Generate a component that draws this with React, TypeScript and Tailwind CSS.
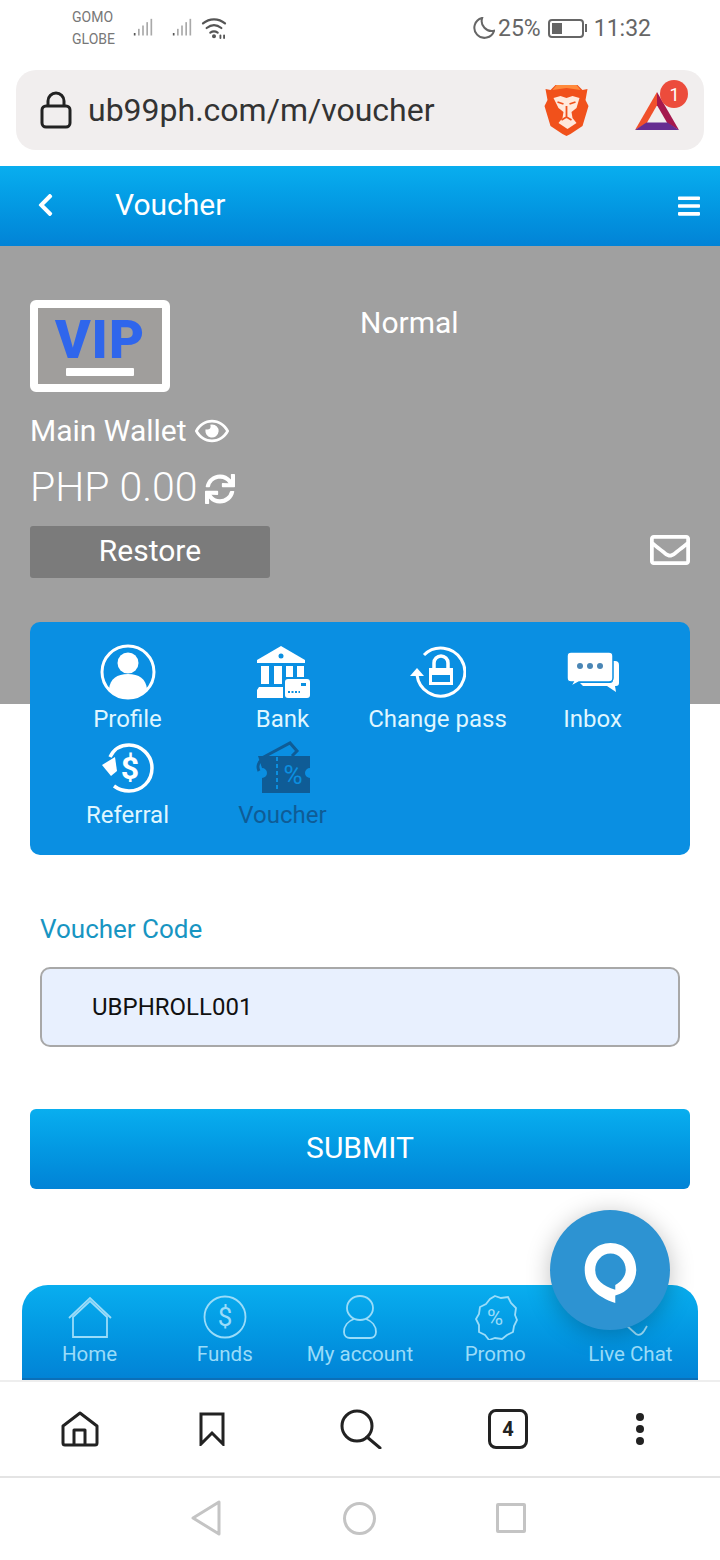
import React from 'react';
import { FaChevronLeft, FaBars, FaRegEye, FaSync, FaRegEnvelope } from 'react-icons/fa';

type IconProps = { className?: string };

function SignalBars({ className }: IconProps) {
  return (
    <svg viewBox="0 0 24 24" className={className} fill="#a9a9a9">
      <rect x="1" y="18" width="2" height="3" fill="#555" />
      <rect x="6" y="13" width="2" height="8" />
      <rect x="11" y="9" width="2" height="12" />
      <rect x="16" y="5" width="2" height="16" />
      <rect x="21" y="1" width="2" height="20" />
    </svg>
  );
}

function WifiIcon({ className }: IconProps) {
  return (
    <svg viewBox="0 0 28 24" className={className} fill="none" stroke="#555" strokeWidth="2.4" strokeLinecap="round">
      <path d="M2 7c7-6 17-6 24 0" />
      <path d="M6 12c5-4 11-4 16 0" />
      <path d="M10 17c3-2 5-2 8 0" />
      <circle cx="14" cy="21" r="1" fill="#555" />
      <path d="M21 20v3M25 20v3" strokeWidth="2" />
    </svg>
  );
}

function BraveLogo({ className }: IconProps) {
  return (
    <svg viewBox="0 0 44 52" className={className}>
      <path d="M11 1h22l5 5 5-1-2 11 3 6-6 20-12 8-4 2-4-2-12-8-6-20 3-6L1 5l5 1z" fill="#f1511b" />
      <path d="M12 1h20l4 5-14-2-14 2z" fill="#ff8a3c" />
      <path d="M9 14l7-2 6 2 6-2 7 2-3 10-5 4 1 6 4 5-9 6-9-6 4-5 1-6-5-4z" fill="#ffe9dc" />
      <path d="M13 18l6 2M31 18l-6 2M22 22v11M17 36l5-3 5 3" fill="none" stroke="#f1511b" strokeWidth="1.800" />
    </svg>
  );
}

function BatLogo({ className }: IconProps) {
  return (
    <svg viewBox="0 0 46 44" className={className}>
      <path d="M23 2L0 42l12-7L23 16z" fill="#f0502b" />
      <path d="M23 2l23 40-12-7L23 16z" fill="#a5184e" />
      <path d="M0 42h46l-12-8H12z" fill="#662d91" />
    </svg>
  );
}

function ProfileIcon({ className }: IconProps) {
  return (
    <svg viewBox="0 0 56 56" className={className}>
      <circle cx="28" cy="28" r="26" fill="none" stroke="#fff" strokeWidth="3" />
      <circle cx="28" cy="19" r="10.5" fill="#fff" />
      <path d="M9 45c1-10 8-15 19-15s18 5 19 15c-5 6-12 9-19 9s-14-3-19-9z" fill="#fff" />
    </svg>
  );
}

function BankIcon({ className }: IconProps) {
  return (
    <svg viewBox="0 0 54 52" className={className} fill="#fff">
      <path d="M25 0L1 14v3h48v-3z" />
      <circle cx="25" cy="10" r="2.5" fill="#0b8fe0" />
      <rect x="5" y="20" width="8" height="18" />
      <rect x="18" y="20" width="8" height="18" />
      <rect x="30" y="20" width="7" height="11" />
      <rect x="41" y="20" width="7" height="11" />
      <path d="M3 41h24v11H1v-8z" />
      <rect x="29" y="33" width="25" height="19" rx="3" />
      <path d="M32 46h12" stroke="#0b8fe0" strokeWidth="2" strokeDasharray="2 1.5" />
      <rect x="45" y="37" width="5" height="3" fill="#0b8fe0" />
    </svg>
  );
}

function ChangePassIcon({ className }: IconProps) {
  return (
    <svg viewBox="0 0 56 52" className={className}>
      <path d="M14 9A24 24 0 1 1 7 29" fill="none" stroke="#fff" strokeWidth="3" />
      <path d="M0 30l7-8 7 8z" fill="#fff" />
      <path d="M24 23v-6a7 7 0 0 1 14 0v6" fill="none" stroke="#fff" strokeWidth="3.500" />
      <path d="M19 22h24v17H19z M22 29v7h18v-7z" fill="#fff" fillRule="evenodd" />
    </svg>
  );
}

function InboxIcon({ className }: IconProps) {
  return (
    <svg viewBox="0 0 52 40" className={className} fill="#fff">
      <path d="M46 9h2a4 4 0 0 1 4 4v18a3 3 0 0 1-3 3h-1l1 6-9-6H16l-3-3h30a3 3 0 0 0 3-3z" />
      <path
        d="M4 0h38a4 4 0 0 1 4 4v22a4 4 0 0 1-4 4H12l-9 5 3-5H4a4 4 0 0 1-4-4V4a4 4 0 0 1 4-4z"
        stroke="#0a8fe2"
        strokeWidth="1.500"
      />
      <circle cx="13" cy="14" r="3" fill="#4a86b5" />
      <circle cx="23" cy="14" r="3" fill="#4a86b5" />
      <circle cx="33" cy="14" r="3" fill="#4a86b5" />
    </svg>
  );
}

function ReferralIcon({ className }: IconProps) {
  return (
    <svg viewBox="0 0 54 50" className={className}>
      <path d="M9 14C13 6 20 2 28 2c12 0 23 10 23 23S41 48 28 48c-6 0-11-2-15-5" fill="none" stroke="#fff" strokeWidth="3.500" />
      <path d="M1 22l13-8 2 14-6 5z" fill="#fff" />
      <text x="29" y="36" textAnchor="middle" fontFamily="Roboto, sans-serif" fontWeight="700" fontSize="32" fill="#fff">$</text>
    </svg>
  );
}

function VoucherIcon({ className }: IconProps) {
  return (
    <svg viewBox="0 0 54 54" className={className}>
      <path d="M4 18L34 2l7 8-5 5M7 18c-5 3-6 8-4 12" fill="none" stroke="#0f5c96" strokeWidth="3" />
      <path d="M2 15h52v12a5 5 0 0 0 0 10v15H6V37a5 5 0 0 0 0-10z" fill="#0f5c96" />
      <path d="M21 16v35" stroke="#0b8fe0" strokeWidth="2" strokeDasharray="4 3" />
      <text x="37" y="43" textAnchor="middle" fontFamily="Roboto, sans-serif" fontSize="26" fill="#0b8fe0">%</text>
    </svg>
  );
}

function HomeTab({ className }: IconProps) {
  return (
    <svg viewBox="0 0 44 42" className={className} fill="none" stroke="#9adcf9" strokeWidth="1.800">
      <path d="M1 22L22 2l21 20" />
      <path d="M5 41V21L22 5l17 16v20z" />
    </svg>
  );
}

function FundsTab({ className }: IconProps) {
  return (
    <svg viewBox="0 0 44 44" className={className} fill="none" stroke="#9adcf9" strokeWidth="1.800">
      <circle cx="22" cy="22" r="20.500" />
      <text x="22" y="31" textAnchor="middle" fontFamily="Roboto, sans-serif" fontSize="26" fill="#9adcf9" stroke="none">$</text>
    </svg>
  );
}

function AccountTab({ className }: IconProps) {
  return (
    <svg viewBox="0 0 34 44" className={className} fill="none" stroke="#9adcf9" strokeWidth="1.800">
      <ellipse cx="17" cy="13" rx="13" ry="12" />
      <path d="M11 24C5 26 1 31 1 37c0 4 3 6 6 6h20c3 0 6-2 6-6 0-6-4-11-10-13" />
    </svg>
  );
}

function PromoTab({ className }: IconProps) {
  return (
    <svg viewBox="0 0 46 46" className={className} fill="none" stroke="#9adcf9" strokeWidth="1.800">
      <path d="M23 2l6 2 7-1 3 6 5 5-1 7 2 5-3 6-1 6-6 3-5 4-7-1-6 2-4-5-6-3v-7l-3-6 3-5 1-7 6-3 4-5z" />
      <text x="23" y="31" textAnchor="middle" fontFamily="Roboto, sans-serif" fontSize="22" fill="#9adcf9" stroke="none">%</text>
    </svg>
  );
}

// mostly hidden behind the floating chat button, only the tail shows
function ChatTab({ className }: IconProps) {
  return (
    <svg viewBox="0 0 44 44" className={className} fill="none" stroke="#9adcf9" strokeWidth="1.800">
      <path d="M18 30l10 9c3 2 6 0 8-3l3-5" />
    </svg>
  );
}

function NavHome({ className }: IconProps) {
  return (
    <svg viewBox="0 0 38 36" className={className} fill="none" stroke="#222" strokeWidth="3" strokeLinejoin="round">
      <path d="M2 15L19 2l17 13v17a2 2 0 0 1-2 2H4a2 2 0 0 1-2-2z" />
      <path d="M13 34V19h11v15" />
    </svg>
  );
}

function NavBookmark({ className }: IconProps) {
  return (
    <svg viewBox="0 0 26 34" className={className} fill="none" stroke="#222" strokeWidth="3">
      <path d="M2 2h22v30l-11-11L2 32z" />
    </svg>
  );
}

function NavSearch({ className }: IconProps) {
  return (
    <svg viewBox="0 0 42 40" className={className} fill="none" stroke="#222" strokeWidth="3" strokeLinecap="round">
      <circle cx="17" cy="17" r="15" />
      <path d="M27 28l13 11" />
    </svg>
  );
}

const accountItems = [
  { label: 'Profile', icon: <ProfileIcon className="h-[56px] w-[56px]" />, active: false },
  { label: 'Bank', icon: <BankIcon className="h-[52px] w-[54px]" />, active: false },
  { label: 'Change pass', icon: <ChangePassIcon className="h-[52px] w-[56px]" />, active: false },
  { label: 'Inbox', icon: <InboxIcon className="h-[40px] w-[52px]" />, active: false },
  { label: 'Referral', icon: <ReferralIcon className="h-[50px] w-[54px]" />, active: false },
  { label: 'Voucher', icon: <VoucherIcon className="h-[54px] w-[54px]" />, active: true },
];

const tabs = [
  { label: 'Home', icon: <HomeTab className="h-[42px] w-[44px]" /> },
  { label: 'Funds', icon: <FundsTab className="h-[44px] w-[44px]" /> },
  { label: 'My account', icon: <AccountTab className="h-[44px] w-[34px]" /> },
  { label: 'Promo', icon: <PromoTab className="h-[46px] w-[46px]" /> },
  { label: 'Live Chat', icon: <ChatTab className="h-[44px] w-[44px]" /> },
];

export default function App() {
  return (
    <div className="relative flex h-[1560px] w-[720px] flex-col overflow-hidden bg-white font-['Roboto',sans-serif]">
      {/* phone status bar */}
      <div className="flex h-[70px] shrink-0 items-center justify-between pl-[72px] pr-[69px] pb-[14px] text-[#666]">
        <div className="flex items-center">
          <div className="flex flex-col text-[14px] leading-[22px] text-[#777]">
            <span>GOMO</span>
            <span>GLOBE</span>
          </div>
          <SignalBars className="ml-[16px] h-[20px] w-[24px]" />
          <SignalBars className="ml-[15px] h-[20px] w-[24px]" />
          <WifiIcon className="ml-[7px] h-[22px] w-[26px]" />
        </div>
        <div className="flex items-center text-[23px] leading-none">
          <svg viewBox="0 0 24 24" className="h-[22px] w-[22px]" fill="none" stroke="#666" strokeWidth="2.200">
            <path d="M10 1a11 11 0 1 0 13 14A11 11 0 0 1 10 1z" />
          </svg>
          <span className="ml-[3px]">25%</span>
          <div className="ml-[7px] flex h-[19px] w-[36px] items-center rounded-[4px] border-2 border-[#666] p-[2px]">
            <div className="h-full w-[10px] bg-[#666]" />
          </div>
          <div className="ml-[1px] h-[8px] w-[2px] bg-[#666]" />
          <span className="ml-[7px]">11:32</span>
        </div>
      </div>

      {/* browser address bar */}
      <div className="mx-[16px] flex h-[80px] shrink-0 items-center rounded-[20px] bg-[#f1eeee] pl-[24px]">
        <svg viewBox="0 0 32 38" className="h-[38px] w-[32px]" fill="none" stroke="#222" strokeWidth="3">
          <path d="M8 15V10a8 8 0 0 1 16 0v5" />
          <rect x="2" y="15" width="28" height="21" rx="4" />
        </svg>
        <span className="ml-[16px] text-[32px] leading-none text-[#333]">ub99ph.com/m/voucher</span>
        <BraveLogo className="ml-[110px] h-[52px] w-[45px]" />
        <div className="relative ml-[45px]">
          <BatLogo className="mt-[2px] h-[42px] w-[46px]" />
          <div className="absolute -right-[8px] -top-[8px] flex h-[28px] w-[28px] items-center justify-center rounded-full bg-[#ec4c3c] text-[18px] text-white">
            1
          </div>
        </div>
      </div>

      {/* site header */}
      <div className="mt-[16px] flex h-[80px] shrink-0 items-center bg-gradient-to-b from-[#09aeef] to-[#0283d6] pl-[37px] pr-[20px] text-white">
        <FaChevronLeft className="mb-[3px] h-[26px] w-[17px]" />
        <span className="mb-[4px] ml-[61px] flex-1 text-[30px]">Voucher</span>
        <FaBars className="h-[26px] w-[22px]" />
      </div>

      {/* wallet panel */}
      <div className="flex h-[458px] shrink-0 flex-col bg-[#a0a0a0] px-[30px] pt-[54px] text-white">
        <div className="flex">
          <div className="flex h-[92px] w-[140px] flex-col items-center rounded-[6px] border-[8px] border-white bg-[#a09e9c] pt-[5px]">
            <span className="text-[54px] font-black leading-[54px] tracking-[1px] text-[#2f66ec]">VIP</span>
            <div className="mt-[1px] h-[8px] w-[68px] rounded-[1px] bg-white" />
          </div>
          <span className="ml-[190px] mt-[5px] text-[30px] leading-[36px]">Normal</span>
        </div>
        <div className="mt-[21px] flex items-center">
          <span className="text-[30px] leading-[36px]">Main Wallet</span>
          <FaRegEye className="ml-[8px] h-[34px] w-[34px]" />
        </div>
        <div className="mt-[14px] flex items-center">
          <span className="text-[41px] font-light leading-[48px]">PHP 0.00</span>
          <FaSync className="ml-[7px] mt-[4px] h-[30px] w-[30px]" />
        </div>
        <div className="mt-[15px] flex items-center justify-between">
          <button className="h-[52px] w-[240px] rounded-[3px] bg-[#7b7b7b] pb-[3px] text-[30px] text-white">Restore</button>
          <FaRegEnvelope className="mb-[4px] h-[40px] w-[40px]" />
        </div>
      </div>

      {/* account shortcuts, overlaps the grey panel */}
      <div className="relative mx-[30px] -mt-[82px] grid h-[233px] shrink-0 grid-cols-4 content-start rounded-[10px] bg-[#0a8fe2] px-[20px] pt-[20px]">
        {accountItems.map(item => (
          <div key={item.label} className="flex h-[96px] flex-col items-center">
            <div className="flex h-[60px] items-center">{item.icon}</div>
            <span className={`mt-[2px] text-[24px] leading-[30px] ${item.active ? 'text-[#0f5c96]' : 'text-[#dff6ff]'}`}>
              {item.label}
            </span>
          </div>
        ))}
      </div>

      {/* voucher form */}
      <label className="ml-[40px] mt-[58px] shrink-0 text-[26px] leading-[32px] text-[#1895c2]">Voucher Code</label>
      <div className="mx-[40px] mt-[22px] flex h-[80px] shrink-0 items-center rounded-[10px] border-2 border-[#a8a8a8] bg-[#e8f0fe] pl-[50px] text-[24px] text-[#111]">
        UBPHROLL001
      </div>
      <button className="mx-[30px] mt-[62px] h-[80px] shrink-0 rounded-[6px] bg-gradient-to-b from-[#09aeef] to-[#0283d6] pb-[3px] text-[30px] text-white">
        SUBMIT
      </button>

      {/* site bottom tabs */}
      <div className="mx-[22px] mt-[96px] grid h-[95px] shrink-0 grid-cols-5 rounded-t-[26px] border-b-2 border-[#0b6fb8] bg-gradient-to-b from-[#09aeef] to-[#0283d6] pt-[8px]">
        {tabs.map(tab => (
          <div key={tab.label} className="flex flex-col items-center">
            <div className="flex h-[48px] items-center">{tab.icon}</div>
            <span className="text-[20.500px] leading-[26px] text-[#9adcf9]">{tab.label}</span>
          </div>
        ))}
      </div>

      {/* browser bottom nav */}
      <div className="flex h-[98px] shrink-0 items-center border-y-2 border-t-[#eeeeee] border-b-[#e4e4e4] pl-[61px]">
        <NavHome className="h-[36px] w-[38px]" />
        <NavBookmark className="ml-[100px] h-[34px] w-[26px]" />
        <NavSearch className="ml-[115px] h-[40px] w-[42px]" />
        <div className="ml-[106px] flex h-[40px] w-[40px] items-center justify-center rounded-[8px] border-[3px] border-[#222] text-[20px] font-bold text-[#222]">
          4
        </div>
        <div className="ml-[108px] flex flex-col gap-[4px]">
          <div className="h-[8px] w-[8px] rounded-full bg-[#222]" />
          <div className="h-[8px] w-[8px] rounded-full bg-[#222]" />
          <div className="h-[8px] w-[8px] rounded-full bg-[#222]" />
        </div>
      </div>

      {/* android nav */}
      <div className="flex flex-1 items-center pb-[2px] pl-[191px]">
        <svg viewBox="0 0 30 36" className="h-[36px] w-[30px]" fill="none" stroke="#c4c4c4" strokeWidth="3" strokeLinejoin="round">
          <path d="M28 2v32L2 18z" />
        </svg>
        <div className="ml-[122px] h-[33px] w-[33px] rounded-full border-[3px] border-[#c4c4c4]" />
        <div className="ml-[120px] h-[30px] w-[30px] rounded-[2px] border-[3px] border-[#c4c4c4]" />
      </div>

      {/* floating chat button */}
      <div className="absolute left-[550px] top-[1210px] flex h-[120px] w-[120px] items-center justify-center rounded-full bg-[#2d93d2] pt-[4px] shadow-[0_4px_24px_rgba(0,0,0,0.25)]">
        <svg viewBox="0 0 58 66" className="h-[63px] w-[57px]">
          <path
            d="M29 2c15 0 27 12 27 28 0 13-9 24-22 27v8C14 58 2 47 2 30 2 14 14 2 29 2zm0 11c-9 0-16 8-16 17 0 11 8 17 21 21v-5c6-3 11-9 11-16 0-9-7-17-16-17z"
            fill="#fff"
            fillRule="evenodd"
          />
        </svg>
      </div>
    </div>
  );
}
